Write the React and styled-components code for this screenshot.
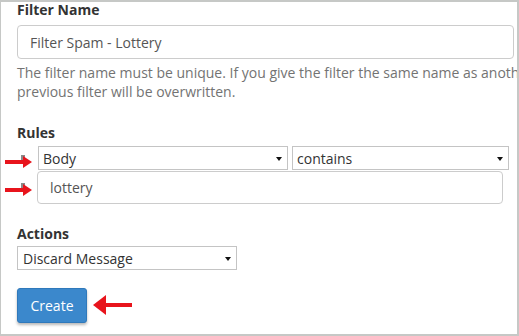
import React from "react";
import styled, { createGlobalStyle } from "styled-components";

const Global = createGlobalStyle`
  html, body { margin: 0; padding: 0; background: #ffffff; }
  * { box-sizing: border-box; }
`;

const Frame = styled.div`
  position: relative;
  width: 519px;
  height: 336px;
  overflow: hidden;
  background: #ffffff;
  border-style: solid;
  border-color: #c6c8c6;
  border-width: 2px 2px 2px 1px;
  padding: 0 0 0 16px;
  font-family: "Open Sans", "Noto Sans", sans-serif;
  font-size: 14px;
  color: #333333;
`;

const Label = styled.div`
  font-weight: 700;
  font-size: 14px;
  line-height: 20px;
  color: #333333;
  margin-top: ${(p) => p.$mt || 0}px;
`;

const TextInput = styled.div`
  display: flex;
  align-items: center;
  width: ${(p) => p.$w}px;
  height: ${(p) => p.$h}px;
  margin-top: ${(p) => p.$mt || 0}px;
  margin-left: ${(p) => p.$ml || 0}px;
  padding-left: ${(p) => p.$pl || 12}px;
  border: 1px solid #cccccc;
  border-radius: 4px;
  color: #555555;
  font-size: 14px;
  white-space: nowrap;
`;

const Help = styled.div`
  margin-top: 4px;
  width: 520px;
  font-size: 14px;
  line-height: 19px;
  color: #737373;
`;

const Select = styled.div`
  display: flex;
  align-items: center;
  justify-content: space-between;
  width: ${(p) => p.$w}px;
  height: 24px;
  padding: 0 5px 0 4px;
  border: 1px solid #c4c4c4;
  background: #ffffff;
  color: #333333;
  font-size: 14px;
  white-space: nowrap;
`;

const Caret = styled.span`
  width: 0;
  height: 0;
  border-left: 3.5px solid transparent;
  border-right: 3.5px solid transparent;
  border-top: 4px solid #111111;
  margin-top: 1px;
`;

const Rules = styled.div`
  position: relative;
  margin-top: 3px;
  padding-left: 21px;
`;

const RuleRow = styled.div`
  display: flex;
  gap: 4px;
`;

const Mark = styled.svg`
  position: absolute;
  left: ${(p) => p.$x}px;
  top: ${(p) => p.$y}px;
`;

const ActionSelect = styled(Select)`
  margin-top: 2px;
  padding-left: 5px;
`;

const ButtonRow = styled.div`
  position: relative;
  margin-top: 18px;
  display: flex;
  align-items: center;
`;

const Button = styled.div`
  display: flex;
  align-items: center;
  justify-content: center;
  width: 70px;
  height: 35px;
  background: #3b88cc;
  border: 1px solid #2f79bb;
  border-radius: 3px;
  color: #ffffff;
  font-size: 14px;
  box-shadow: 0 2px 3px rgba(0, 0, 0, 0.28);
`;

const RightArrow = ({ x, y }) => (
  <Mark $x={x} $y={y} width="30" height="14" viewBox="0 0 30 14">
    <polygon points="16,0 20,0 20,6 16,6" fill="#8a8a8a" />
    <rect x="0" y="5" width="20" height="4" fill="#e8141c" />
    <polygon points="18,1 27,7 18,13" fill="#e8141c" />
  </Mark>
);

export default function App() {
  return (
    <>
      <Global />
      <Frame>
        <Label $mt={-2}>Filter Name</Label>
        <TextInput $w={497} $h={34} $mt={5} $pl={12}>
          Filter Spam - Lottery
        </TextInput>
        <Help>
          The filter name must be unique. If you give the filter the same name as another
          <br />
          previous filter will be overwritten.
        </Help>

        <Label $mt={22}>Rules</Label>
        <Rules>
          <RuleRow>
            <Select $w={250}>
              <span>Body</span>
              <Caret />
            </Select>
            <Select $w={217}>
              <span>contains</span>
              <Caret />
            </Select>
          </RuleRow>
          <TextInput $w={466} $h={33} $mt={1} $ml={-1} $pl={12}>
            lottery
          </TextInput>
          <RightArrow x={-12} y={9} />
          <RightArrow x={-12} y={37} />
        </Rules>

        <Label $mt={20}>Actions</Label>
        <ActionSelect $w={220}>
          <span>Discard Message</span>
          <Caret />
        </ActionSelect>

        <ButtonRow>
          <Button>Create</Button>
          <Mark $x={76} $y={6} width="40" height="22" viewBox="0 0 40 22">
            <polygon points="0,11 13,1 13,21" fill="#e8141c" />
            <rect x="12" y="9" width="27" height="4" fill="#e8141c" />
          </Mark>
        </ButtonRow>
      </Frame>
    </>
  );
}
